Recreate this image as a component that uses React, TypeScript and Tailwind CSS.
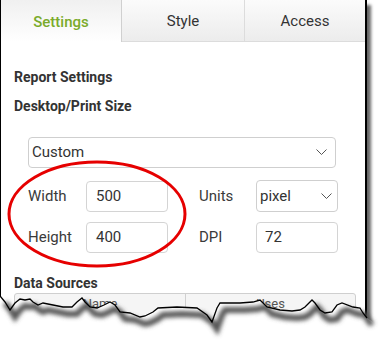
import React from "react";

const tornPoints: [number, number][] = [
    [0, 296], [5, 302], [10, 310], [15, 303], [20, 299], [25, 300], [30, 299], [33, 302],
    [38, 305], [43, 303], [53, 305], [63, 307], [72, 307], [77, 302], [82, 298], [85, 302],
    [90, 307], [97, 308], [104, 305], [110, 302], [115, 305], [120, 312], [130, 313],
    [140, 317], [145, 316], [153, 312], [158, 308], [177, 307], [197, 308], [207, 315],
    [212, 322], [217, 308], [220, 303], [240, 303], [253, 302], [260, 300], [267, 307],
    [280, 310], [292, 311], [300, 310], [305, 307], [312, 300], [315, 303], [320, 310],
    [325, 313], [332, 312], [337, 305], [342, 303], [353, 307], [360, 308], [363, 313],
    [367, 318],
];

function TornEdge() {
    const line = tornPoints.map((p) => p.join(",")).join(" ");
    const fill = line + " 367,318 376,324 382,324 382,343 0,343";
    return (
        <svg className="absolute left-0 top-0" width={382} height={343} viewBox="0 0 382 343">
            <defs>
                <filter id="blur" x="-10%" y="-50%" width="120%" height="200%">
                    <feGaussianBlur stdDeviation="2" />
                </filter>
            </defs>
            <polygon points={fill} fill="#fff" />
            <polyline
                points={line}
                fill="none"
                stroke="#555"
                strokeWidth={6}
                filter="url(#blur)"
                transform="translate(5,7)"
            />
            <polyline points={line} fill="none" stroke="#000" strokeWidth={1.3} />
        </svg>
    );
}

function Chevron() {
    return (
        <svg width={11} height={7} viewBox="0 0 11 7" className="shrink-0">
            <polyline points="0.5,0.5 5.5,5.5 10.5,0.5" fill="none" stroke="#555" strokeWidth={1} />
        </svg>
    );
}

function Field({ value, pad }: { value: string; pad: string }) {
    return (
        <div className={`w-[82px] h-[31px] border border-[#d4d4d4] rounded-[4px] flex items-center ${pad} text-[15px] text-[#333]`}>
            {value}
        </div>
    );
}

export default function App() {
    const tabs = [
        { text: "Settings", active: true, w: "w-[121px]" },
        { text: "Style", active: false, w: "w-[123px]" },
        { text: "Access", active: false, w: "flex-1" },
    ];

    return (
        <div className="relative w-[382px] h-[343px] bg-white overflow-hidden font-['Roboto',sans-serif]">
            <div className="w-[367px] h-[343px] bg-white border-l border-r-2 border-black shadow-[4px_5px_3px_rgba(0,0,0,0.6)]">
                <div className="flex h-[42px]">
                    {tabs.map((tab, i) => (
                        <div
                            key={i}
                            className={
                                tab.active
                                    ? `${tab.w} pt-[2px] bg-gradient-to-b from-[#f0f0f0] to-[#ffffff] border-r border-[#d0d0d0] flex items-center justify-center text-[15px] font-medium text-[#7aab2a]`
                                    : `${tab.w} pt-[2px] bg-gradient-to-b from-[#fbfbfb] to-[#ececec] border-b border-r border-[#dcdcdc] last:border-r-0 flex items-center justify-center text-[15px] text-[#333]`
                            }
                        >
                            {tab.text}
                        </div>
                    ))}
                </div>

                <div className="pl-[13px]">
                    <h2 className="mt-[25px] text-[14px] leading-[20px] font-bold text-[#333]">Report Settings</h2>
                    <h2 className="mt-[9px] text-[14px] leading-[20px] font-bold text-[#333]">Desktop/Print Size</h2>

                    <div className="pl-[14px]">
                        <div className="mt-[21px] w-[308px] h-[31px] border border-[#cfcfcf] rounded-[4px] flex items-center justify-between pl-[3px] pr-[8px] text-[15px] text-[#333]">
                            <span>Custom</span>
                            <Chevron />
                        </div>

                        <div className="mt-[12px] flex items-center">
                            <span className="w-[58px] text-[15px] text-[#3a3a3a]">Width</span>
                            <Field value="500" pad="pl-[9px]" />
                            <span className="ml-[31px] w-[57px] text-[15px] text-[#3a3a3a]">Units</span>
                            <div className="w-[82px] h-[32px] border border-[#cfcfcf] rounded-[4px] flex items-center justify-between pl-[3px] pr-[5px] text-[15px] text-[#333]">
                                <span>pixel</span>
                                <Chevron />
                            </div>
                        </div>

                        <div className="mt-[10px] flex items-center">
                            <span className="w-[58px] text-[15px] text-[#3a3a3a]">Height</span>
                            <Field value="400" pad="pl-[9px]" />
                            <span className="ml-[31px] w-[57px] text-[15px] text-[#3a3a3a]">DPI</span>
                            <Field value="72" pad="pl-[8px]" />
                        </div>
                    </div>

                    <h2 className="mt-[20px] text-[14px] leading-[20px] font-bold text-[#333]">Data Sources</h2>
                    <div className="w-[342px] h-[28px] border border-[#cfcfcf] rounded-t-[3px] bg-[#f5f5f5] flex text-[13px] leading-[15px] text-[#555]">
                        <div className="w-[171px] pt-[2px] border-r border-[#d0d0d0] text-center">Name</div>
                        <div className="flex-1 pt-[2px] text-center">Uses</div>
                    </div>
                </div>
            </div>

            <svg className="absolute left-0 top-0 pointer-events-none" width={382} height={343} viewBox="0 0 382 343">
                <ellipse cx={97} cy={214} rx={88} ry={52} fill="none" stroke="#e60000" strokeWidth={3} />
            </svg>

            <TornEdge />
        </div>
    );
}
